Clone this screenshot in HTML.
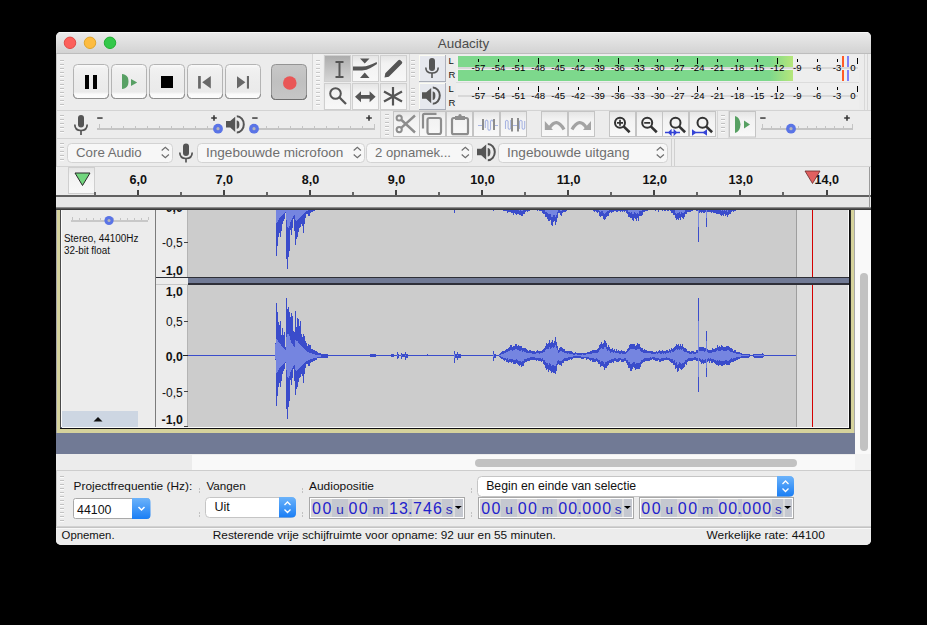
<!DOCTYPE html><html><head><meta charset="utf-8"><style>html,body{margin:0;padding:0;background:#000;width:927px;height:625px;overflow:hidden}svg{display:block}</style></head><body>
<svg width="927" height="625" viewBox="0 0 927 625" font-family="Liberation Sans" shape-rendering="crispEdges">
<defs>
<linearGradient id="gT" x1="0" y1="0" x2="0" y2="1"><stop offset="0" stop-color="#ebebeb"/><stop offset="1" stop-color="#d3d3d3"/></linearGradient>
<linearGradient id="gB" x1="0" y1="0" x2="0" y2="1"><stop offset="0" stop-color="#fbfbfb"/><stop offset="0.12" stop-color="#f1f1f1"/><stop offset="0.5" stop-color="#ececec"/><stop offset="0.8" stop-color="#eaeaea"/><stop offset="0.88" stop-color="#fafafa"/><stop offset="1" stop-color="#fcfcfc"/></linearGradient>
<linearGradient id="gR" x1="0" y1="0" x2="0" y2="1"><stop offset="0" stop-color="#c8c8c8"/><stop offset="0.5" stop-color="#c0c0c0"/><stop offset="1" stop-color="#c6c6c6"/></linearGradient>
<linearGradient id="gSel" x1="0" y1="0" x2="0" y2="1"><stop offset="0" stop-color="#acacac"/><stop offset="1" stop-color="#d6d6d6"/></linearGradient>
<linearGradient id="gTool" x1="0" y1="0" x2="0" y2="1"><stop offset="0" stop-color="#e4e4e4"/><stop offset="0.3" stop-color="#f2f2f2"/><stop offset="1" stop-color="#f8f8f8"/></linearGradient>
<linearGradient id="gGreen" x1="0" y1="0" x2="1" y2="0"><stop offset="0" stop-color="#7dd88c"/><stop offset="0.93" stop-color="#7dd88c"/><stop offset="1" stop-color="#b6e67a"/></linearGradient>
<linearGradient id="gBlue" x1="0" y1="0" x2="0" y2="1"><stop offset="0" stop-color="#6cb3fa"/><stop offset="1" stop-color="#1a7ef5"/></linearGradient>
<clipPath id="win"><rect x="56" y="32" width="815" height="513" rx="5"/></clipPath>
</defs>
<g clip-path="url(#win)">
<rect x="56" y="32" width="815" height="513" fill="#ececec"/>
<rect x="56" y="32" width="815" height="21" fill="url(#gT)"/>
<rect x="56" y="32" width="815" height="1" fill="#f6f6f6"/>
<rect x="56" y="53" width="815" height="1" fill="#bdbdbd"/>
<g shape-rendering="auto">
<circle cx="70" cy="42.8" r="5.75" fill="#fc605b" stroke="#e0443e" stroke-width="0.9"/>
<circle cx="90" cy="42.8" r="5.75" fill="#fdbc40" stroke="#dea123" stroke-width="0.9"/>
<circle cx="110" cy="42.8" r="5.75" fill="#34c84a" stroke="#1aab29" stroke-width="0.9"/>
<text x="463.5" y="48" font-size="13" fill="#4c4c4c" text-anchor="middle" textLength="51.5" lengthAdjust="spacingAndGlyphs">Audacity</text>
</g>
<rect x="56" y="110" width="815" height="1" fill="#d3d3d3"/>
<rect x="56" y="138" width="815" height="1" fill="#d3d3d3"/>
<rect x="56" y="166" width="815" height="1" fill="#d3d3d3"/>
<rect x="56" y="54" width="1" height="491" fill="#c9c9c9"/>
<rect x="60" y="60" width="4" height="1" fill="#c2c2c2"/>
<rect x="60" y="61" width="4" height="1" fill="#fbfbfb"/>
<rect x="60" y="64" width="4" height="1" fill="#c2c2c2"/>
<rect x="60" y="65" width="4" height="1" fill="#fbfbfb"/>
<rect x="60" y="68" width="4" height="1" fill="#c2c2c2"/>
<rect x="60" y="69" width="4" height="1" fill="#fbfbfb"/>
<rect x="60" y="72" width="4" height="1" fill="#c2c2c2"/>
<rect x="60" y="73" width="4" height="1" fill="#fbfbfb"/>
<rect x="60" y="76" width="4" height="1" fill="#c2c2c2"/>
<rect x="60" y="77" width="4" height="1" fill="#fbfbfb"/>
<rect x="60" y="80" width="4" height="1" fill="#c2c2c2"/>
<rect x="60" y="81" width="4" height="1" fill="#fbfbfb"/>
<rect x="60" y="84" width="4" height="1" fill="#c2c2c2"/>
<rect x="60" y="85" width="4" height="1" fill="#fbfbfb"/>
<rect x="60" y="88" width="4" height="1" fill="#c2c2c2"/>
<rect x="60" y="89" width="4" height="1" fill="#fbfbfb"/>
<rect x="60" y="92" width="4" height="1" fill="#c2c2c2"/>
<rect x="60" y="93" width="4" height="1" fill="#fbfbfb"/>
<rect x="60" y="96" width="4" height="1" fill="#c2c2c2"/>
<rect x="60" y="97" width="4" height="1" fill="#fbfbfb"/>
<rect x="60" y="100" width="4" height="1" fill="#c2c2c2"/>
<rect x="60" y="101" width="4" height="1" fill="#fbfbfb"/>
<rect x="60" y="104" width="4" height="1" fill="#c2c2c2"/>
<rect x="60" y="105" width="4" height="1" fill="#fbfbfb"/>
<g shape-rendering="auto">
<rect x="73.5" y="64.5" width="35" height="34" rx="4" fill="url(#gB)" stroke="#b4b4b4"/>
<path d="M73.5 94 q0 4.5 4 4.5 h27 q4 0 4 -4.5" stroke="#8e8e8e" fill="none"/>
<rect x="111.5" y="64.5" width="35" height="34" rx="4" fill="url(#gB)" stroke="#b4b4b4"/>
<path d="M111.5 94 q0 4.5 4 4.5 h27 q4 0 4 -4.5" stroke="#8e8e8e" fill="none"/>
<rect x="149.5" y="64.5" width="35" height="34" rx="4" fill="url(#gB)" stroke="#b4b4b4"/>
<path d="M149.5 94 q0 4.5 4 4.5 h27 q4 0 4 -4.5" stroke="#8e8e8e" fill="none"/>
<rect x="187.5" y="64.5" width="35" height="34" rx="4" fill="url(#gB)" stroke="#b4b4b4"/>
<path d="M187.5 94 q0 4.5 4 4.5 h27 q4 0 4 -4.5" stroke="#8e8e8e" fill="none"/>
<rect x="225.5" y="64.5" width="35" height="34" rx="4" fill="url(#gB)" stroke="#b4b4b4"/>
<path d="M225.5 94 q0 4.5 4 4.5 h27 q4 0 4 -4.5" stroke="#8e8e8e" fill="none"/>
<rect x="271.5" y="64.5" width="35" height="35" rx="4" fill="url(#gR)" stroke="#949494"/>
<path d="M271.5 95 q0 4.5 4 4.5 h27 q4 0 4 -4.5" stroke="#6e6e6e" fill="none"/>
<rect x="85" y="75" width="4" height="14" fill="#000"/>
<rect x="93" y="75" width="4" height="14" fill="#000"/>
<path d="M122 74 C126.5 74.5 128.5 77 128.5 81.5 C128.5 86 126.5 88.5 122 89 Z" fill="#58a064"/>
<path d="M131 79 L137.2 82.5 L131 86 Z" fill="#58a064"/>
<rect x="161" y="76" width="12" height="12" fill="#000"/>
<rect x="198.1" y="76" width="2.7" height="12.6" fill="#686868"/><path d="M210.8 76 L202.2 82.3 L210.8 88.6 Z" fill="#686868"/>
<path d="M237 76.2 L245.4 82.3 L237 88.4 Z" fill="#686868"/><rect x="246.9" y="76" width="2.1" height="12.6" fill="#686868"/>
<circle cx="289.8" cy="83" r="6.8" fill="#e95757"/>
</g>
<rect x="312" y="54" width="1" height="56" fill="#d6d6d6"/>
<rect x="313" y="54" width="10" height="56" fill="#f0f0f0"/>
<rect x="316" y="60" width="4" height="1" fill="#c8c8c8"/>
<rect x="316" y="61" width="4" height="1" fill="#fbfbfb"/>
<rect x="316" y="64" width="4" height="1" fill="#c8c8c8"/>
<rect x="316" y="65" width="4" height="1" fill="#fbfbfb"/>
<rect x="316" y="68" width="4" height="1" fill="#c8c8c8"/>
<rect x="316" y="69" width="4" height="1" fill="#fbfbfb"/>
<rect x="316" y="72" width="4" height="1" fill="#c8c8c8"/>
<rect x="316" y="73" width="4" height="1" fill="#fbfbfb"/>
<rect x="316" y="76" width="4" height="1" fill="#c8c8c8"/>
<rect x="316" y="77" width="4" height="1" fill="#fbfbfb"/>
<rect x="316" y="80" width="4" height="1" fill="#c8c8c8"/>
<rect x="316" y="81" width="4" height="1" fill="#fbfbfb"/>
<rect x="316" y="84" width="4" height="1" fill="#c8c8c8"/>
<rect x="316" y="85" width="4" height="1" fill="#fbfbfb"/>
<rect x="316" y="88" width="4" height="1" fill="#c8c8c8"/>
<rect x="316" y="89" width="4" height="1" fill="#fbfbfb"/>
<rect x="316" y="92" width="4" height="1" fill="#c8c8c8"/>
<rect x="316" y="93" width="4" height="1" fill="#fbfbfb"/>
<rect x="316" y="96" width="4" height="1" fill="#c8c8c8"/>
<rect x="316" y="97" width="4" height="1" fill="#fbfbfb"/>
<rect x="316" y="100" width="4" height="1" fill="#c8c8c8"/>
<rect x="316" y="101" width="4" height="1" fill="#fbfbfb"/>
<rect x="316" y="104" width="4" height="1" fill="#c8c8c8"/>
<rect x="316" y="105" width="4" height="1" fill="#fbfbfb"/>
<g shape-rendering="auto">
<rect x="324.5" y="55.5" width="26" height="26" fill="url(#gSel)" stroke="#cfcfcf"/>
<rect x="352.5" y="55.5" width="26" height="26" fill="url(#gTool)" stroke="#cfcfcf"/>
<rect x="380.5" y="55.5" width="26" height="26" fill="url(#gTool)" stroke="#cfcfcf"/>
<rect x="324.5" y="83.5" width="26" height="26" fill="url(#gTool)" stroke="#cfcfcf"/>
<rect x="352.5" y="83.5" width="26" height="26" fill="url(#gTool)" stroke="#cfcfcf"/>
<rect x="380.5" y="83.5" width="26" height="26" fill="url(#gTool)" stroke="#cfcfcf"/>
<path d="M335.5 62h8M335.5 77h8M339.5 62v15" stroke="#555" stroke-width="2" fill="none"/>
<path d="M360 58.5h9.5l-4.75 5z M360 78h9.5l-4.75-5.5z" fill="#555"/>
<path d="M353 66.5 h9 q4 0 7 -1.2 q4 -1.2 7.7 -3.2 l0.3 2 q-3 2 -6.5 4 q-3.5 2.2 -8.5 2.4 h-9z" fill="#555"/>
<path d="M384.5 77.5 l0.8 -4.3 l13 -13 q1 -1 2.2 0 l1.3 1.3 q1 1 0 2.2 l-13 13 z" fill="#555"/>
<circle cx="335.5" cy="93.5" r="5.3" stroke="#555" stroke-width="2" fill="none"/><path d="M339.3 97.3 L346 104" stroke="#555" stroke-width="2.3"/>
<path d="M355 96.8 l6 -5.5 v3.6 h8.6 v-3.6 l6 5.5 l-6 5.5 v-3.6 h-8.6 v3.6 z" fill="#555"/>
<path d="M393 87v18.5 M384 91.5 l18 10 M402 91.5 l-18 10" stroke="#555" stroke-width="2.2"/>
</g>
<rect x="409" y="54" width="1" height="56" fill="#d6d6d6"/>
<rect x="411" y="60" width="4" height="1" fill="#c2c2c2"/>
<rect x="411" y="61" width="4" height="1" fill="#fbfbfb"/>
<rect x="411" y="64" width="4" height="1" fill="#c2c2c2"/>
<rect x="411" y="65" width="4" height="1" fill="#fbfbfb"/>
<rect x="411" y="68" width="4" height="1" fill="#c2c2c2"/>
<rect x="411" y="69" width="4" height="1" fill="#fbfbfb"/>
<rect x="411" y="72" width="4" height="1" fill="#c2c2c2"/>
<rect x="411" y="73" width="4" height="1" fill="#fbfbfb"/>
<rect x="411" y="76" width="4" height="1" fill="#c2c2c2"/>
<rect x="411" y="77" width="4" height="1" fill="#fbfbfb"/>
<rect x="411" y="88" width="4" height="1" fill="#c2c2c2"/>
<rect x="411" y="89" width="4" height="1" fill="#fbfbfb"/>
<rect x="411" y="92" width="4" height="1" fill="#c2c2c2"/>
<rect x="411" y="93" width="4" height="1" fill="#fbfbfb"/>
<rect x="411" y="96" width="4" height="1" fill="#c2c2c2"/>
<rect x="411" y="97" width="4" height="1" fill="#fbfbfb"/>
<rect x="411" y="100" width="4" height="1" fill="#c2c2c2"/>
<rect x="411" y="101" width="4" height="1" fill="#fbfbfb"/>
<rect x="411" y="104" width="4" height="1" fill="#c2c2c2"/>
<rect x="411" y="105" width="4" height="1" fill="#fbfbfb"/>
<g shape-rendering="auto">
</g>
<rect x="419" y="55" width="27" height="27" fill="#e6e8ee"/>
<rect x="419" y="55" width="27" height="1" fill="#fbfbf2"/>
<rect x="419" y="55" width="1" height="27" fill="#fbfbf2"/>
<rect x="445" y="55" width="1" height="27" fill="#aeb2bd"/>
<rect x="419" y="81" width="27" height="1" fill="#a9adb8"/>
<rect x="419" y="83" width="27" height="27" fill="#e6e8ee"/>
<rect x="419" y="83" width="27" height="1" fill="#fbfbf2"/>
<rect x="419" y="83" width="1" height="27" fill="#fbfbf2"/>
<rect x="445" y="83" width="1" height="27" fill="#aeb2bd"/>
<rect x="419" y="109" width="27" height="1" fill="#a9adb8"/>
<g shape-rendering="auto">
<rect x="429" y="58" width="6" height="13" rx="3" fill="#555"/><path d="M425.8 67.5 q0 5.5 6.2 5.5 q6.2 0 6.2 -5.5" stroke="#555" stroke-width="1.6" fill="none"/><path d="M432 73v5" stroke="#555" stroke-width="1.6"/>
<path d="M422 92.2 h4.2 l5 -4.3 v15.3 l-5 -4.4 h-4.2z" fill="#555"/><path d="M432.7 91.6 a2.7 4.2 0 0 1 0 8.4z" fill="#555"/><path d="M432.8 87.5 a7 8.1 0 0 1 0 16.2" stroke="#555" stroke-width="2" fill="none"/>
</g>
<text x="448.5" y="64" font-size="9.5" fill="#111" shape-rendering="auto">L</text>
<text x="448.5" y="78" font-size="9.5" fill="#111" shape-rendering="auto">R</text>
<text x="448.5" y="92" font-size="9.5" fill="#111" shape-rendering="auto">L</text>
<text x="448.5" y="106" font-size="9.5" fill="#111" shape-rendering="auto">R</text>
<rect x="456" y="55" width="403" height="27" fill="#eeeeee"/>
<rect x="456" y="83" width="403" height="26" fill="#eeeeee"/>
<rect x="456" y="82" width="403" height="1" fill="#dcdcdc"/>
<rect x="458" y="56" width="335" height="11" fill="url(#gGreen)"/>
<rect x="458" y="70" width="335" height="11" fill="url(#gGreen)"/>
<rect x="458" y="67" width="400" height="2" fill="#d8d8d8"/>
<rect x="458" y="95" width="400" height="2" fill="#d8d8d8"/>
<rect x="842" y="56" width="2" height="11" fill="#ff5a28"/>
<rect x="842" y="70" width="2" height="11" fill="#ff5a28"/>
<rect x="847" y="56" width="2" height="11" fill="#7f7ffa"/>
<rect x="847" y="70" width="2" height="11" fill="#7f7ffa"/>
<g shape-rendering="auto">
<rect x="478" y="59" width="1" height="3" fill="#000"/>
<text x="478.5" y="71.2" font-size="9.6" fill="#000" text-anchor="middle">-57</text>
<rect x="478" y="87" width="1" height="3" fill="#000"/>
<text x="478.5" y="99.2" font-size="9.6" fill="#000" text-anchor="middle">-57</text>
<rect x="498" y="59" width="1" height="3" fill="#000"/>
<text x="498.42" y="71.2" font-size="9.6" fill="#000" text-anchor="middle">-54</text>
<rect x="498" y="87" width="1" height="3" fill="#000"/>
<text x="498.42" y="99.2" font-size="9.6" fill="#000" text-anchor="middle">-54</text>
<rect x="518" y="59" width="1" height="3" fill="#000"/>
<text x="518.3399999999999" y="71.2" font-size="9.6" fill="#000" text-anchor="middle">-51</text>
<rect x="518" y="87" width="1" height="3" fill="#000"/>
<text x="518.3399999999999" y="99.2" font-size="9.6" fill="#000" text-anchor="middle">-51</text>
<rect x="538" y="58" width="1" height="6" fill="#000"/>
<text x="538.26" y="71.2" font-size="9.6" fill="#000" text-anchor="middle">-48</text>
<rect x="538" y="86" width="1" height="6" fill="#000"/>
<text x="538.26" y="99.2" font-size="9.6" fill="#000" text-anchor="middle">-48</text>
<rect x="558" y="59" width="1" height="3" fill="#000"/>
<text x="558.18" y="71.2" font-size="9.6" fill="#000" text-anchor="middle">-45</text>
<rect x="558" y="87" width="1" height="3" fill="#000"/>
<text x="558.18" y="99.2" font-size="9.6" fill="#000" text-anchor="middle">-45</text>
<rect x="578" y="59" width="1" height="3" fill="#000"/>
<text x="578.0999999999999" y="71.2" font-size="9.6" fill="#000" text-anchor="middle">-42</text>
<rect x="578" y="87" width="1" height="3" fill="#000"/>
<text x="578.0999999999999" y="99.2" font-size="9.6" fill="#000" text-anchor="middle">-42</text>
<rect x="598" y="59" width="1" height="3" fill="#000"/>
<text x="598.02" y="71.2" font-size="9.6" fill="#000" text-anchor="middle">-39</text>
<rect x="598" y="87" width="1" height="3" fill="#000"/>
<text x="598.02" y="99.2" font-size="9.6" fill="#000" text-anchor="middle">-39</text>
<rect x="618" y="58" width="1" height="6" fill="#000"/>
<text x="617.9399999999999" y="71.2" font-size="9.6" fill="#000" text-anchor="middle">-36</text>
<rect x="618" y="86" width="1" height="6" fill="#000"/>
<text x="617.9399999999999" y="99.2" font-size="9.6" fill="#000" text-anchor="middle">-36</text>
<rect x="638" y="59" width="1" height="3" fill="#000"/>
<text x="637.8599999999999" y="71.2" font-size="9.6" fill="#000" text-anchor="middle">-33</text>
<rect x="638" y="87" width="1" height="3" fill="#000"/>
<text x="637.8599999999999" y="99.2" font-size="9.6" fill="#000" text-anchor="middle">-33</text>
<rect x="657" y="59" width="1" height="3" fill="#000"/>
<text x="657.78" y="71.2" font-size="9.6" fill="#000" text-anchor="middle">-30</text>
<rect x="657" y="87" width="1" height="3" fill="#000"/>
<text x="657.78" y="99.2" font-size="9.6" fill="#000" text-anchor="middle">-30</text>
<rect x="677" y="59" width="1" height="3" fill="#000"/>
<text x="677.6999999999999" y="71.2" font-size="9.6" fill="#000" text-anchor="middle">-27</text>
<rect x="677" y="87" width="1" height="3" fill="#000"/>
<text x="677.6999999999999" y="99.2" font-size="9.6" fill="#000" text-anchor="middle">-27</text>
<rect x="697" y="58" width="1" height="6" fill="#000"/>
<text x="697.6199999999999" y="71.2" font-size="9.6" fill="#000" text-anchor="middle">-24</text>
<rect x="697" y="86" width="1" height="6" fill="#000"/>
<text x="697.6199999999999" y="99.2" font-size="9.6" fill="#000" text-anchor="middle">-24</text>
<rect x="717" y="59" width="1" height="3" fill="#000"/>
<text x="717.54" y="71.2" font-size="9.6" fill="#000" text-anchor="middle">-21</text>
<rect x="717" y="87" width="1" height="3" fill="#000"/>
<text x="717.54" y="99.2" font-size="9.6" fill="#000" text-anchor="middle">-21</text>
<rect x="737" y="59" width="1" height="3" fill="#000"/>
<text x="737.46" y="71.2" font-size="9.6" fill="#000" text-anchor="middle">-18</text>
<rect x="737" y="87" width="1" height="3" fill="#000"/>
<text x="737.46" y="99.2" font-size="9.6" fill="#000" text-anchor="middle">-18</text>
<rect x="757" y="59" width="1" height="3" fill="#000"/>
<text x="757.3799999999999" y="71.2" font-size="9.6" fill="#000" text-anchor="middle">-15</text>
<rect x="757" y="87" width="1" height="3" fill="#000"/>
<text x="757.3799999999999" y="99.2" font-size="9.6" fill="#000" text-anchor="middle">-15</text>
<rect x="777" y="58" width="1" height="6" fill="#000"/>
<text x="777.3" y="71.2" font-size="9.6" fill="#000" text-anchor="middle">-12</text>
<rect x="777" y="86" width="1" height="6" fill="#000"/>
<text x="777.3" y="99.2" font-size="9.6" fill="#000" text-anchor="middle">-12</text>
<rect x="797" y="59" width="1" height="3" fill="#000"/>
<text x="797.22" y="71.2" font-size="9.6" fill="#000" text-anchor="middle">-9</text>
<rect x="797" y="87" width="1" height="3" fill="#000"/>
<text x="797.22" y="99.2" font-size="9.6" fill="#000" text-anchor="middle">-9</text>
<rect x="817" y="59" width="1" height="3" fill="#000"/>
<text x="817.14" y="71.2" font-size="9.6" fill="#000" text-anchor="middle">-6</text>
<rect x="817" y="87" width="1" height="3" fill="#000"/>
<text x="817.14" y="99.2" font-size="9.6" fill="#000" text-anchor="middle">-6</text>
<rect x="837" y="59" width="1" height="3" fill="#000"/>
<text x="837.06" y="71.2" font-size="9.6" fill="#000" text-anchor="middle">-3</text>
<rect x="837" y="87" width="1" height="3" fill="#000"/>
<text x="837.06" y="99.2" font-size="9.6" fill="#000" text-anchor="middle">-3</text>
<rect x="857" y="58" width="1" height="6" fill="#000"/>
<text x="852.8" y="71.2" font-size="9.6" fill="#000" text-anchor="middle">0</text>
<rect x="857" y="86" width="1" height="6" fill="#000"/>
<text x="852.8" y="99.2" font-size="9.6" fill="#000" text-anchor="middle">0</text>
</g>
<rect x="864" y="54" width="1" height="56" fill="#d8d8d8"/>
<rect x="867" y="54" width="1" height="56" fill="#d8d8d8"/>
<rect x="60" y="115" width="4" height="1" fill="#c2c2c2"/>
<rect x="60" y="116" width="4" height="1" fill="#fbfbfb"/>
<rect x="60" y="119" width="4" height="1" fill="#c2c2c2"/>
<rect x="60" y="120" width="4" height="1" fill="#fbfbfb"/>
<rect x="60" y="123" width="4" height="1" fill="#c2c2c2"/>
<rect x="60" y="124" width="4" height="1" fill="#fbfbfb"/>
<rect x="60" y="127" width="4" height="1" fill="#c2c2c2"/>
<rect x="60" y="128" width="4" height="1" fill="#fbfbfb"/>
<rect x="60" y="131" width="4" height="1" fill="#c2c2c2"/>
<rect x="60" y="132" width="4" height="1" fill="#fbfbfb"/>
<g shape-rendering="auto">
<rect x="78" y="115" width="6" height="12.5" rx="3" fill="#555"/><path d="M74.8 124.5 q0 6 6.2 6 q6.2 0 6.2 -6" stroke="#555" stroke-width="1.7" fill="none"/><path d="M81 130.5v4.5" stroke="#555" stroke-width="1.7"/>
<path d="M226 121.0 h4.2 l5 -4.3 v15.3 l-5 -4.4 h-4.2z" fill="#555"/><path d="M236.7 120.39999999999999 a2.7 4.2 0 0 1 0 8.4z" fill="#555"/><path d="M236.8 116.3 a7 8.1 0 0 1 0 16.2" stroke="#555" stroke-width="2" fill="none"/>
</g>
<rect x="97" y="128" width="123" height="2" fill="#c4c4c4"/>
<rect x="99" y="124" width="1" height="4" fill="#c4c4c4"/>
<rect x="111" y="126" width="1" height="2" fill="#c4c4c4"/>
<rect x="123" y="126" width="1" height="2" fill="#c4c4c4"/>
<rect x="135" y="126" width="1" height="2" fill="#c4c4c4"/>
<rect x="147" y="126" width="1" height="2" fill="#c4c4c4"/>
<rect x="159" y="126" width="1" height="2" fill="#c4c4c4"/>
<rect x="171" y="126" width="1" height="2" fill="#c4c4c4"/>
<rect x="183" y="126" width="1" height="2" fill="#c4c4c4"/>
<rect x="195" y="126" width="1" height="2" fill="#c4c4c4"/>
<rect x="207" y="126" width="1" height="2" fill="#c4c4c4"/>
<rect x="219" y="124" width="1" height="4" fill="#c4c4c4"/>
<rect x="97.2" y="117.2" width="5.4" height="1.7" fill="#505050" shape-rendering="auto"/>
<path d="M211.2 118h5.6 M214 115.2v5.6" stroke="#383838" stroke-width="1.6" shape-rendering="auto"/>
<circle cx="218" cy="128.7" r="4.9" fill="#5a74e6" shape-rendering="auto"/><circle cx="218" cy="128.7" r="1.6" fill="#b4b4bc" shape-rendering="auto"/>
<rect x="254" y="128" width="121" height="2" fill="#c4c4c4"/>
<rect x="254" y="124" width="1" height="4" fill="#c4c4c4"/>
<rect x="266" y="126" width="1" height="2" fill="#c4c4c4"/>
<rect x="278" y="126" width="1" height="2" fill="#c4c4c4"/>
<rect x="290" y="126" width="1" height="2" fill="#c4c4c4"/>
<rect x="302" y="126" width="1" height="2" fill="#c4c4c4"/>
<rect x="314" y="126" width="1" height="2" fill="#c4c4c4"/>
<rect x="326" y="126" width="1" height="2" fill="#c4c4c4"/>
<rect x="338" y="126" width="1" height="2" fill="#c4c4c4"/>
<rect x="350" y="126" width="1" height="2" fill="#c4c4c4"/>
<rect x="362" y="126" width="1" height="2" fill="#c4c4c4"/>
<rect x="374" y="124" width="1" height="4" fill="#c4c4c4"/>
<rect x="252.2" y="117.2" width="5.4" height="1.7" fill="#505050" shape-rendering="auto"/>
<path d="M366.2 118h5.6 M369 115.2v5.6" stroke="#383838" stroke-width="1.6" shape-rendering="auto"/>
<circle cx="254" cy="128.7" r="4.9" fill="#5a74e6" shape-rendering="auto"/><circle cx="254" cy="128.7" r="1.6" fill="#b4b4bc" shape-rendering="auto"/>
<rect x="380" y="111" width="1" height="27" fill="#d6d6d6"/>
<rect x="385" y="114" width="4" height="1" fill="#c2c2c2"/>
<rect x="385" y="115" width="4" height="1" fill="#fbfbfb"/>
<rect x="385" y="118" width="4" height="1" fill="#c2c2c2"/>
<rect x="385" y="119" width="4" height="1" fill="#fbfbfb"/>
<rect x="385" y="122" width="4" height="1" fill="#c2c2c2"/>
<rect x="385" y="123" width="4" height="1" fill="#fbfbfb"/>
<rect x="385" y="126" width="4" height="1" fill="#c2c2c2"/>
<rect x="385" y="127" width="4" height="1" fill="#fbfbfb"/>
<rect x="385" y="130" width="4" height="1" fill="#c2c2c2"/>
<rect x="385" y="131" width="4" height="1" fill="#fbfbfb"/>
<rect x="385" y="134" width="4" height="1" fill="#c2c2c2"/>
<rect x="385" y="135" width="4" height="1" fill="#fbfbfb"/>
<g shape-rendering="auto">
<rect x="393.5" y="111.5" width="26" height="25" fill="url(#gTool)" stroke="#c4c4c4"/>
<rect x="419.5" y="111.5" width="26" height="25" fill="url(#gTool)" stroke="#c4c4c4"/>
<rect x="446.5" y="111.5" width="26" height="25" fill="url(#gTool)" stroke="#c4c4c4"/>
<rect x="473.5" y="111.5" width="26" height="25" fill="url(#gTool)" stroke="#c4c4c4"/>
<rect x="500.5" y="111.5" width="26" height="25" fill="url(#gTool)" stroke="#c4c4c4"/>
<rect x="541.5" y="111.5" width="26" height="25" fill="url(#gTool)" stroke="#c4c4c4"/>
<rect x="568.5" y="111.5" width="26" height="25" fill="url(#gTool)" stroke="#c4c4c4"/>
<rect x="609.5" y="111.5" width="26" height="25" fill="url(#gTool)" stroke="#c4c4c4"/>
<rect x="636.5" y="111.5" width="26" height="25" fill="url(#gTool)" stroke="#c4c4c4"/>
<rect x="662.5" y="111.5" width="26" height="25" fill="url(#gTool)" stroke="#c4c4c4"/>
<rect x="689.5" y="111.5" width="26" height="25" fill="url(#gTool)" stroke="#c4c4c4"/>
<circle cx="399.2" cy="118" r="2.6" stroke="#8d8d8d" stroke-width="2" fill="none"/><circle cx="399.2" cy="129.6" r="2.6" stroke="#8d8d8d" stroke-width="2" fill="none"/><path d="M401.5 120 L415 132.5 M401.5 127.6 L415 115.5" stroke="#8d8d8d" stroke-width="2.4"/>
<path d="M423 128.5 v-13.2 q0-1.5 1.5-1.5 h12" stroke="#8d8d8d" stroke-width="2.2" fill="none"/><rect x="427.5" y="118" width="13.5" height="16" rx="2" stroke="#8d8d8d" stroke-width="2.2" fill="none"/>
<rect x="452" y="118" width="16" height="16.2" rx="1.8" stroke="#8d8d8d" stroke-width="2.2" fill="none"/><path d="M455 116 h10 v4 h-10z" fill="#8d8d8d"/><circle cx="460" cy="115.5" r="1.6" fill="#8d8d8d"/>
<path d="M478 125.5 h4 M495 125.5 h3" stroke="#a9b5e2" stroke-width="1.2"/><path d="M485.3 128 V121.5 Q486.6 118.8 487.9 121.5 V129 Q489.2 131.6 490.5 129 V121.5 Q491.8 118.8 493 121.5" stroke="#a9b5e2" stroke-width="1.1" fill="none"/><path d="M483 119v11 M494 119v11" stroke="#8d8d8d" stroke-width="2"/>
<path d="M505.5 129 V121.5 Q506.8 119 508.1 121.5 V128 Q509.4 130.6 510.7 128 V120" stroke="#a9b5e2" stroke-width="1.1" fill="none"/><path d="M513 125.5h4" stroke="#a9b5e2" stroke-width="1.2"/><path d="M519.5 129 V121.5 Q520.8 119 522.1 121.5 V128 Q523.4 130.6 524.7 128 V121" stroke="#a9b5e2" stroke-width="1.1" fill="none"/><path d="M512 118v13.5 M518 118v13.5" stroke="#8d8d8d" stroke-width="2"/>
<path d="M549.5 128 Q556.5 116.5 564 129.5" stroke="#a3a3a3" stroke-width="3.3" fill="none"/><path d="M544.8 121 V130 H553z" fill="#a3a3a3"/>
<path d="M586.5 128 Q579.5 116.5 572 129.5" stroke="#a3a3a3" stroke-width="3.3" fill="none"/><path d="M591 121 V130 H583z" fill="#a3a3a3"/>
<circle cx="620" cy="122.8" r="5" stroke="#333" stroke-width="2" fill="none"/><path d="M623.6 126.39999999999999 l6 5.8" stroke="#333" stroke-width="2.6"/>
<path d="M617 122.8h6 M620 119.8v6" stroke="#333" stroke-width="1.7"/>
<circle cx="647.2" cy="122.8" r="5" stroke="#333" stroke-width="2" fill="none"/><path d="M650.8000000000001 126.39999999999999 l6 5.8" stroke="#333" stroke-width="2.6"/>
<path d="M644.2 122.8h6" stroke="#333" stroke-width="1.7"/>
<circle cx="675.5" cy="122.8" r="5" stroke="#333" stroke-width="2" fill="none"/><path d="M679.1 126.39999999999999 l6 5.8" stroke="#333" stroke-width="2.6"/>
<path d="M665 132.5 H680" stroke="#3443d6" stroke-width="1.4"/><path d="M668 132.5 L671.6 128.8 V136.2z M677.2 132.5 L673.6 128.8 V136.2z" fill="#3443d6"/>
<circle cx="702.5" cy="122.8" r="5" stroke="#333" stroke-width="2" fill="none"/><path d="M706.1 126.39999999999999 l6 5.8" stroke="#333" stroke-width="2.6"/>
<path d="M692.5 132.5 H706.5" stroke="#3443d6" stroke-width="1.4"/><path d="M692 129.2 V135.8 L696.5 132.5z M707 129.2 V135.8 L702.5 132.5z" fill="#3443d6"/>
</g>
<rect x="717" y="111" width="1" height="27" fill="#d6d6d6"/>
<rect x="721" y="115" width="4" height="1" fill="#c2c2c2"/>
<rect x="721" y="116" width="4" height="1" fill="#fbfbfb"/>
<rect x="721" y="119" width="4" height="1" fill="#c2c2c2"/>
<rect x="721" y="120" width="4" height="1" fill="#fbfbfb"/>
<rect x="721" y="123" width="4" height="1" fill="#c2c2c2"/>
<rect x="721" y="124" width="4" height="1" fill="#fbfbfb"/>
<rect x="721" y="127" width="4" height="1" fill="#c2c2c2"/>
<rect x="721" y="128" width="4" height="1" fill="#fbfbfb"/>
<rect x="721" y="131" width="4" height="1" fill="#c2c2c2"/>
<rect x="721" y="132" width="4" height="1" fill="#fbfbfb"/>
<rect x="728" y="111" width="1" height="27" fill="#dcdcdc"/>
<rect x="729.5" y="111.5" width="26" height="25.5" fill="url(#gTool)" stroke="#c4c4c4" shape-rendering="auto"/>
<path d="M735 116 q5 1 5.5 8.5 q-0.5 7.5 -5.5 8.5z" fill="#56a062" shape-rendering="auto"/><path d="M744 120.5l6 4l-6 4z" fill="#56a062" shape-rendering="auto"/>
<rect x="761" y="128" width="92" height="2" fill="#c4c4c4"/>
<rect x="762" y="124" width="1" height="4" fill="#c4c4c4"/>
<rect x="771" y="126" width="1" height="2" fill="#c4c4c4"/>
<rect x="780" y="126" width="1" height="2" fill="#c4c4c4"/>
<rect x="789" y="126" width="1" height="2" fill="#c4c4c4"/>
<rect x="798" y="126" width="1" height="2" fill="#c4c4c4"/>
<rect x="807" y="126" width="1" height="2" fill="#c4c4c4"/>
<rect x="816" y="126" width="1" height="2" fill="#c4c4c4"/>
<rect x="825" y="126" width="1" height="2" fill="#c4c4c4"/>
<rect x="834" y="126" width="1" height="2" fill="#c4c4c4"/>
<rect x="843" y="126" width="1" height="2" fill="#c4c4c4"/>
<rect x="852" y="124" width="1" height="4" fill="#c4c4c4"/>
<rect x="760.2" y="117.2" width="5.4" height="1.7" fill="#505050" shape-rendering="auto"/>
<path d="M844.2 118h5.6 M847 115.2v5.6" stroke="#383838" stroke-width="1.6" shape-rendering="auto"/>
<circle cx="791" cy="128.7" r="4.9" fill="#5a74e6" shape-rendering="auto"/><circle cx="791" cy="128.7" r="1.6" fill="#b4b4bc" shape-rendering="auto"/>
<rect x="60" y="143" width="4" height="1" fill="#c2c2c2"/>
<rect x="60" y="144" width="4" height="1" fill="#fbfbfb"/>
<rect x="60" y="147" width="4" height="1" fill="#c2c2c2"/>
<rect x="60" y="148" width="4" height="1" fill="#fbfbfb"/>
<rect x="60" y="151" width="4" height="1" fill="#c2c2c2"/>
<rect x="60" y="152" width="4" height="1" fill="#fbfbfb"/>
<rect x="60" y="155" width="4" height="1" fill="#c2c2c2"/>
<rect x="60" y="156" width="4" height="1" fill="#fbfbfb"/>
<rect x="60" y="159" width="4" height="1" fill="#c2c2c2"/>
<rect x="60" y="160" width="4" height="1" fill="#fbfbfb"/>
<rect x="67.5" y="143.5" width="105" height="19" rx="4" fill="#f7f7f7" stroke="#d3d3d3" shape-rendering="auto"/>
<text x="76" y="157" font-size="13" fill="#6f6f6f" textLength="65.7" lengthAdjust="spacingAndGlyphs" shape-rendering="auto">Core Audio</text>
<path d="M161.70000000000002 150.5 l3.6 -3.3 l3.6 3.3 M161.70000000000002 154.5 l3.6 3.3 l3.6 -3.3" stroke="#6f6f6f" stroke-width="1.2" fill="none" shape-rendering="auto"/>
<rect x="197.5" y="143.5" width="167" height="19" rx="4" fill="#f7f7f7" stroke="#d3d3d3" shape-rendering="auto"/>
<text x="206" y="157" font-size="13" fill="#6f6f6f" textLength="137.3" lengthAdjust="spacingAndGlyphs" shape-rendering="auto">Ingebouwde microfoon</text>
<path d="M353.7 150.5 l3.6 -3.3 l3.6 3.3 M353.7 154.5 l3.6 3.3 l3.6 -3.3" stroke="#6f6f6f" stroke-width="1.2" fill="none" shape-rendering="auto"/>
<rect x="366.5" y="143.5" width="106" height="19" rx="4" fill="#f7f7f7" stroke="#d3d3d3" shape-rendering="auto"/>
<text x="375" y="157" font-size="13" fill="#6f6f6f" textLength="76" lengthAdjust="spacingAndGlyphs" shape-rendering="auto">2 opnamek...</text>
<path d="M461.7 150.5 l3.6 -3.3 l3.6 3.3 M461.7 154.5 l3.6 3.3 l3.6 -3.3" stroke="#6f6f6f" stroke-width="1.2" fill="none" shape-rendering="auto"/>
<rect x="498.5" y="143.5" width="169" height="19" rx="4" fill="#f7f7f7" stroke="#d3d3d3" shape-rendering="auto"/>
<text x="507" y="157" font-size="13" fill="#6f6f6f" textLength="122.5" lengthAdjust="spacingAndGlyphs" shape-rendering="auto">Ingebouwde uitgang</text>
<path d="M656.6999999999999 150.5 l3.6 -3.3 l3.6 3.3 M656.6999999999999 154.5 l3.6 3.3 l3.6 -3.3" stroke="#6f6f6f" stroke-width="1.2" fill="none" shape-rendering="auto"/>
<g shape-rendering="auto">
<rect x="183" y="143.5" width="6" height="12.5" rx="3" fill="#555"/><path d="M179.8 152.5 q0 6 6.2 6 q6.2 0 6.2 -6" stroke="#555" stroke-width="1.7" fill="none"/><path d="M186 158.5v4" stroke="#555" stroke-width="1.7"/>
<path d="M477 148.7 h4.2 l5 -4.3 v15.3 l-5 -4.4 h-4.2z" fill="#555"/><path d="M487.7 148.1 a2.7 4.2 0 0 1 0 8.4z" fill="#555"/><path d="M487.8 144.0 a7 8.1 0 0 1 0 16.2" stroke="#555" stroke-width="2" fill="none"/>
</g>
<rect x="671" y="139" width="1" height="27" fill="#d0d0d0"/>
<rect x="674" y="139" width="1" height="27" fill="#d0d0d0"/>
<rect x="56" y="167" width="815" height="28" fill="#ebebeb"/>
<rect x="68.5" y="167.5" width="26" height="26" fill="url(#gTool)" stroke="#cfcfcf" shape-rendering="auto"/>
<path d="M75 173 h15 l-7.5 12.5z" fill="#72d67e" stroke="#2a2a2a" stroke-width="1" shape-rendering="auto"/>
<rect x="94" y="192" width="2" height="3" fill="#666"/>
<rect x="137" y="190" width="2" height="5" fill="#444"/>
<rect x="180" y="192" width="2" height="3" fill="#666"/>
<rect x="223" y="190" width="2" height="5" fill="#444"/>
<rect x="266" y="192" width="2" height="3" fill="#666"/>
<rect x="309" y="190" width="2" height="5" fill="#444"/>
<rect x="352" y="192" width="2" height="3" fill="#666"/>
<rect x="395" y="190" width="2" height="5" fill="#444"/>
<rect x="438" y="192" width="2" height="3" fill="#666"/>
<rect x="481" y="190" width="2" height="5" fill="#444"/>
<rect x="524" y="192" width="2" height="3" fill="#666"/>
<rect x="567" y="190" width="2" height="5" fill="#444"/>
<rect x="610" y="192" width="2" height="3" fill="#666"/>
<rect x="653" y="190" width="2" height="5" fill="#444"/>
<rect x="696" y="192" width="2" height="3" fill="#666"/>
<rect x="739" y="190" width="2" height="5" fill="#444"/>
<rect x="782" y="192" width="2" height="3" fill="#666"/>
<rect x="826" y="190" width="2" height="5" fill="#444"/>
<text x="138.3" y="183.9" font-size="12.6" fill="#111" text-anchor="middle" font-weight="bold" shape-rendering="auto">6,0</text>
<text x="224.37" y="183.9" font-size="12.6" fill="#111" text-anchor="middle" font-weight="bold" shape-rendering="auto">7,0</text>
<text x="310.44" y="183.9" font-size="12.6" fill="#111" text-anchor="middle" font-weight="bold" shape-rendering="auto">8,0</text>
<text x="396.51" y="183.9" font-size="12.6" fill="#111" text-anchor="middle" font-weight="bold" shape-rendering="auto">9,0</text>
<text x="482.58" y="183.9" font-size="12.6" fill="#111" text-anchor="middle" font-weight="bold" shape-rendering="auto">10,0</text>
<text x="568.6499999999999" y="183.9" font-size="12.6" fill="#111" text-anchor="middle" font-weight="bold" shape-rendering="auto">11,0</text>
<text x="654.7199999999999" y="183.9" font-size="12.6" fill="#111" text-anchor="middle" font-weight="bold" shape-rendering="auto">12,0</text>
<text x="740.79" y="183.9" font-size="12.6" fill="#111" text-anchor="middle" font-weight="bold" shape-rendering="auto">13,0</text>
<text x="826.8599999999999" y="183.9" font-size="12.6" fill="#111" text-anchor="middle" font-weight="bold" shape-rendering="auto">14,0</text>
<rect x="56" y="195" width="815" height="2" fill="#606060"/>
<rect x="56" y="197" width="815" height="10" fill="#e6e6e6"/>
<rect x="869" y="167" width="1" height="42" fill="#9a9a9a"/>
<path d="M805 171h15l-7.5 12.5z" fill="#e06060" stroke="#6a2a2a" stroke-width="0.8" shape-rendering="auto"/>
<rect x="56" y="209" width="799" height="245" fill="#717a95"/>
<rect x="855" y="209" width="16" height="261" fill="#f9f9f9"/>
<rect x="57" y="209" width="3" height="224" fill="#d5d29c"/>
<rect x="56" y="209" width="1" height="224" fill="#a6a6a6"/>
<rect x="57" y="429" width="797" height="4" fill="#d5d29c"/>
<rect x="851" y="209" width="3" height="224" fill="#d5d29c"/>
<rect x="60" y="209" width="789" height="218" fill="#ececec"/>
<rect x="60" y="209" width="1" height="219" fill="#4a4a4a"/>
<rect x="61" y="209" width="1" height="218" fill="#fafafa"/>
<rect x="62" y="427" width="787" height="1" fill="#fafafa"/>
<rect x="60" y="428" width="791" height="1" fill="#111"/>
<rect x="848" y="209" width="1" height="219" fill="#fafafa"/>
<rect x="849" y="209" width="1" height="220" fill="#111"/>
<rect x="850" y="209" width="1" height="220" fill="#2a2a2a"/>
<rect x="854" y="209" width="1" height="224" fill="#a8a8a8"/>
<rect x="155" y="209" width="1" height="218" fill="#7b7b7b"/>
<rect x="187" y="209" width="1" height="218" fill="#b4b4b4"/>
<rect x="71" y="220" width="77" height="2" fill="#c8c8c8"/>
<rect x="72" y="217" width="1" height="3" fill="#c4c4c4"/>
<rect x="79" y="218" width="1" height="2" fill="#c4c4c4"/>
<rect x="86" y="218" width="1" height="2" fill="#c4c4c4"/>
<rect x="93" y="218" width="1" height="2" fill="#c4c4c4"/>
<rect x="100" y="218" width="1" height="2" fill="#c4c4c4"/>
<rect x="106" y="218" width="1" height="2" fill="#c4c4c4"/>
<rect x="113" y="218" width="1" height="2" fill="#c4c4c4"/>
<rect x="120" y="218" width="1" height="2" fill="#c4c4c4"/>
<rect x="127" y="218" width="1" height="2" fill="#c4c4c4"/>
<rect x="134" y="218" width="1" height="2" fill="#c4c4c4"/>
<rect x="141" y="218" width="1" height="2" fill="#c4c4c4"/>
<rect x="148" y="217" width="1" height="3" fill="#c4c4c4"/>
<circle cx="109" cy="220.5" r="4.6" fill="#5a74e6" shape-rendering="auto"/><circle cx="109" cy="220.5" r="1.5" fill="#b4b4bc" shape-rendering="auto"/>
<text x="64" y="241.8" font-size="10" fill="#111" textLength="74.4" lengthAdjust="spacingAndGlyphs" shape-rendering="auto">Stereo, 44100Hz</text>
<text x="64" y="253.6" font-size="10" fill="#111" textLength="46" lengthAdjust="spacingAndGlyphs" shape-rendering="auto">32-bit float</text>
<rect x="62" y="411" width="76" height="16" fill="#cdd6e2"/>
<path d="M93.5 421.5h9l-4.5-4.5z" fill="#111" shape-rendering="auto"/>
<rect x="188" y="209" width="608" height="68" fill="#cccccc"/>
<rect x="796" y="209" width="52" height="68" fill="#dedede"/>
<rect x="188" y="285" width="608" height="142" fill="#cccccc"/>
<rect x="796" y="285" width="52" height="142" fill="#dedede"/>
<rect x="796" y="209" width="1" height="68" fill="#9e9e9e"/>
<rect x="796" y="285" width="1" height="142" fill="#9e9e9e"/>
<rect x="156" y="277" width="693" height="1" fill="#2e2f36"/>
<rect x="188" y="278" width="661" height="5" fill="#717a95"/>
<rect x="188" y="283" width="661" height="2" fill="#2e2f38"/>
<rect x="156" y="278" width="32" height="7" fill="#ececec"/>
<rect x="156" y="284" width="32" height="1" fill="#c8c8c8"/>
<clipPath id="vrc"><rect x="156" y="210" width="32" height="67"/></clipPath><g clip-path="url(#vrc)">
<text x="182.8" y="212" font-size="12.3" fill="#111" text-anchor="end" font-weight="bold" shape-rendering="auto">0,0</text>
<text x="182.8" y="247.3" font-size="12" fill="#111" text-anchor="end" shape-rendering="auto">-0,5</text>
<text x="182.8" y="275.2" font-size="12.3" fill="#111" text-anchor="end" font-weight="bold" shape-rendering="auto">-1,0</text>
</g>
<text x="182.8" y="296" font-size="12.3" fill="#111" text-anchor="end" font-weight="bold" shape-rendering="auto">1,0</text>
<text x="182.8" y="325.5" font-size="12" fill="#111" text-anchor="end" shape-rendering="auto">0,5</text>
<text x="182.8" y="361" font-size="12.3" fill="#111" text-anchor="end" font-weight="bold" shape-rendering="auto">0,0</text>
<text x="182.8" y="397" font-size="12" fill="#111" text-anchor="end" shape-rendering="auto">-0,5</text>
<text x="182.8" y="424.3" font-size="12.3" fill="#111" text-anchor="end" font-weight="bold" shape-rendering="auto">-1,0</text>
<rect x="184" y="242" width="4" height="1" fill="#444"/>
<rect x="184" y="321" width="4" height="1" fill="#444"/>
<rect x="184" y="391" width="4" height="1" fill="#444"/>
<rect x="184" y="426" width="4" height="1" fill="#444"/>
<rect x="183" y="355" width="5" height="1" fill="#222"/>
<path d="M188 355H275V356H188zM275 343H276V360H275zM276 303H277V406H276zM277 312H278V396H277zM278 322H279V387H278zM279 325H280V383H279zM280 321H281V387H280zM281 335H282V381H281zM282 328H283V374H282zM283 335H284V371H283zM284 332H285V369H284zM285 347H286V363H285zM286 298H287V409H286zM287 309H288V419H287zM288 307H289V407H288zM289 312H290V401H289zM290 317H291V380H290zM291 313H292V385H291zM292 316H293V378H292zM293 331H294V369H293zM294 332H295V381H294zM295 311H296V395H295zM296 327H297V389H296zM297 318H298V387H297zM298 319H299V382H298zM299 326H300V378H299zM300 321H301V377H300zM301 334H302V374H301zM302 337H303V376H302zM303 334H304V383H303zM304 336H305V374H304zM305 341H306V368H305zM306 343H307V364H306zM307 346H308V364H307zM308 344H309V366H308zM309 345H310V366H309zM310 345H311V363H310zM311 349H313V362H311zM313 350H315V361H313zM315 351H317V360H315zM317 352H318V358H317zM318 353H321V358H318zM321 354H328V358H321zM328 355H370V356H328zM370 354H376V357H370zM376 355H391V356H376zM391 354H394V357H391zM394 355H397V356H394zM397 352H398V359H397zM398 354H399V358H398zM399 355H401V356H399zM401 353H402V359H401zM402 354H405V357H402zM405 352H406V360H405zM406 354H408V358H406zM408 355H427V356H408zM427 354H428V356H427zM428 355H454V356H428zM454 351H455V363H454zM455 354H457V358H455zM457 352H458V360H457zM458 354H461V358H458zM461 355H493V356H461zM493 351H494V361H493zM494 354H496V358H494zM496 355H499V356H496zM499 354H500V357H499zM500 353H501V358H500zM501 352H502V359H501zM502 351H503V359H502zM503 351H504V360H503zM504 351H505V361H504zM505 350H506V360H505zM506 349H508V362H506zM508 348H509V363H508zM509 347H510V362H509zM510 345H511V362H510zM511 345H512V363H511zM512 347H513V362H512zM513 346H515V364H513zM515 344H516V364H515zM516 344H517V363H516zM517 346H518V364H517zM518 345H519V365H518zM519 346H520V366H519zM520 346H521V365H520zM521 346H522V367H521zM522 348H524V366H522zM524 348H525V363H524zM525 348H526V362H525zM526 349H527V362H526zM527 350H528V361H527zM528 351H529V361H528zM529 350H530V361H529zM530 350H531V360H530zM531 351H535V360H531zM535 352H536V360H535zM536 351H537V361H536zM537 350H538V360H537zM538 351H541V361H538zM541 351H542V362H541zM542 350H543V361H542zM543 349H544V364H543zM544 348H545V365H544zM545 346H546V368H545zM546 343H547V370H546zM547 344H548V369H547zM548 343H549V372H548zM549 340H550V370H549zM550 343H551V371H550zM551 342H552V373H551zM552 340H553V372H552zM553 343H554V373H553zM554 341H555V373H554zM555 337H556V374H555zM556 342H557V371H556zM557 346H558V365H557zM558 350H559V364H558zM559 348H560V365H559zM560 347H561V365H560zM561 347H562V366H561zM562 348H563V363H562zM563 349H564V363H563zM564 349H565V361H564zM565 351H568V361H565zM568 351H570V360H568zM570 351H571V359H570zM571 351H572V360H571zM572 352H573V359H572zM573 353H575V358H573zM575 352H576V358H575zM576 353H581V358H576zM581 353H584V359H581zM584 353H586V358H584zM586 353H587V360H586zM587 352H589V359H587zM589 352H590V360H589zM590 351H591V361H590zM591 351H592V360H591zM592 350H596V362H592zM596 350H597V361H596zM597 349H598V362H597zM598 348H599V364H598zM599 345H600V364H599zM600 344H601V367H600zM601 342H602V366H601zM602 344H603V366H602zM603 343H604V367H603zM604 340H605V370H604zM605 341H606V368H605zM606 343H607V368H606zM607 347H608V366H607zM608 345H609V365H608zM609 347H610V363H609zM610 349H612V363H610zM612 348H613V362H612zM613 350H614V363H613zM614 349H615V361H614zM615 351H616V361H615zM616 349H617V362H616zM617 351H618V362H617zM618 350H619V362H618zM619 351H620V361H619zM620 351H621V360H620zM621 350H622V362H621zM622 351H624V362H622zM624 351H625V361H624zM625 352H626V361H625zM626 351H627V363H626zM627 349H628V365H627zM628 348H629V368H628zM629 345H630V368H629zM630 344H632V371H630zM632 344H633V369H632zM633 344H634V367H633zM634 344H635V368H634zM635 346H636V370H635zM636 345H637V369H636zM637 343H638V369H637zM638 344H640V369H638zM640 347H641V367H640zM641 348H642V364H641zM642 348H643V363H642zM643 350H644V362H643zM644 349H645V362H644zM645 350H647V361H645zM647 351H650V361H647zM650 351H652V360H650zM652 351H653V359H652zM653 352H655V360H653zM655 352H656V361H655zM656 351H657V361H656zM657 352H658V361H657zM658 351H659V360H658zM659 350H660V362H659zM660 351H661V362H660zM661 351H662V361H661zM662 350H663V361H662zM663 351H664V361H663zM664 351H666V360H664zM666 350H668V360H666zM668 351H669V360H668zM669 349H670V361H669zM670 350H671V362H670zM671 348H672V363H671zM672 349H673V363H672zM673 348H674V365H673zM674 347H675V365H674zM675 346H676V369H675zM676 344H677V368H676zM677 345H678V372H677zM678 344H679V371H678zM679 346H680V368H679zM680 344H681V369H680zM681 346H682V370H681zM682 344H683V369H682zM683 347H684V368H683zM684 348H685V367H684zM685 348H686V364H685zM686 349H687V365H686zM687 351H688V362H687zM688 351H690V361H688zM690 352H691V361H690zM691 351H693V361H691zM693 351H694V360H693zM694 352H696V360H694zM696 350H698V361H696zM698 298H699V392H698zM699 347H700V361H699zM700 347H701V362H700zM701 347H702V364H701zM702 347H703V363H702zM703 347H704V364H703zM704 348H706V363H704zM706 331H707V377H706zM707 349H708V362H707zM708 350H709V361H708zM709 350H710V363H709zM710 350H711V361H710zM711 350H712V363H711zM712 348H713V363H712zM713 349H714V362H713zM714 349H715V363H714zM715 348H716V364H715zM716 348H717V365H716zM717 345H718V365H717zM718 347H719V366H718zM719 346H720V365H719zM720 347H721V365H720zM721 345H722V366H721zM722 346H723V366H722zM723 347H725V365H723zM725 347H726V364H725zM726 346H729V365H726zM729 347H730V365H729zM730 348H731V363H730zM731 348H732V362H731zM732 349H733V362H732zM733 351H734V362H733zM734 350H736V361H734zM736 352H738V360H736zM738 352H740V359H738zM740 353H742V358H740zM742 354H749V358H742zM749 354H750V357H749zM750 355H753V356H750zM753 354H754V357H753zM754 354H762V358H754zM762 353H763V358H762zM763 354H764V357H763zM764 355H796V356H764z" fill="#3a4ccb"/><path d="M275 344H276V359H275zM276 339H277V373H276zM277 340H278V372H277zM278 342H279V370H278zM279 343H280V368H279zM280 344H281V367H280zM281 346H282V366H281zM282 347H283V365H282zM283 348H284V364H283zM284 349H285V363H284zM285 350H286V362H285zM286 337H287V370H286zM287 334H288V377H287zM288 334H289V378H288zM289 336H290V376H289zM290 340H291V372H290zM291 343H292V370H291zM292 344H293V368H292zM293 346H294V366H293zM294 347H295V365H294zM295 340H296V370H295zM296 341H297V371H296zM297 341H298V370H297zM298 343H299V369H298zM299 344H300V368H299zM300 345H301V367H300zM301 346H302V366H301zM302 347H303V365H302zM303 348H304V364H303zM304 349H305V363H304zM305 350H306V362H305zM306 351H307V361H306zM307 352H308V361H307zM308 352H309V360H308zM309 353H310V360H309zM310 353H312V359H310zM312 354H313V359H312zM313 354H315V358H313zM315 355H317V358H315zM317 355H321V357H317zM397 355H398V356H397zM401 355H402V356H401zM405 355H406V356H405zM454 354H455V358H454zM457 355H458V356H457zM493 354H494V357H493zM499 355H501V356H499zM501 354H503V357H501zM503 354H504V358H503zM504 353H506V358H504zM506 352H507V359H506zM507 352H508V358H507zM508 351H509V360H508zM509 351H510V359H509zM510 350H512V359H510zM512 351H513V359H512zM513 350H515V360H513zM515 349H516V360H515zM516 349H517V359H516zM517 350H518V360H517zM518 350H519V361H518zM519 351H521V361H519zM521 350H522V362H521zM522 352H523V361H522zM523 351H524V361H523zM524 352H526V359H524zM526 353H527V359H526zM527 353H530V358H527zM530 353H532V357H530zM532 354H535V357H532zM535 354H536V358H535zM536 353H539V358H536zM539 354H540V358H539zM540 353H541V358H540zM541 353H542V359H541zM542 353H543V358H542zM543 352H545V360H543zM545 350H546V362H545zM546 349H548V363H546zM548 349H549V365H548zM549 347H550V363H549zM550 349H551V364H550zM551 348H552V366H551zM552 347H553V365H552zM553 348H554V365H553zM554 347H555V366H554zM555 345H556V366H555zM556 348H557V364H556zM557 350H558V361H557zM558 353H559V360H558zM559 352H560V361H559zM560 351H562V361H560zM562 352H563V360H562zM563 352H564V359H563zM564 353H567V358H564zM567 354H568V358H567zM568 353H569V357H568zM569 354H573V357H569zM573 355H575V356H573zM575 354H577V356H575zM577 355H581V356H577zM581 355H582V357H581zM582 354H583V357H582zM583 355H586V357H583zM586 354H589V357H586zM589 354H592V358H589zM592 353H594V358H592zM594 353H596V359H594zM596 353H597V358H596zM597 353H598V359H597zM598 352H599V360H598zM599 350H600V360H599zM600 349H601V362H600zM601 348H602V361H601zM602 349H603V361H602zM603 349H604V362H603zM604 347H605V364H604zM605 347H606V362H605zM606 349H607V362H606zM607 351H608V361H607zM608 350H609V361H608zM609 351H610V360H609zM610 353H611V360H610zM611 352H613V359H611zM613 353H614V359H613zM614 352H615V358H614zM615 353H616V358H615zM616 353H618V359H616zM618 353H619V358H618zM619 354H621V358H619zM621 353H622V359H621zM622 354H624V359H622zM624 354H626V358H624zM626 353H627V360H626zM627 352H628V360H627zM628 351H629V362H628zM629 350H630V362H629zM630 349H632V364H630zM632 349H633V363H632zM633 349H635V362H633zM635 350H636V364H635zM636 350H637V363H636zM637 349H640V363H637zM640 351H641V362H640zM641 352H643V360H641zM643 353H644V359H643zM644 353H650V358H644zM650 353H651V357H650zM651 354H652V358H651zM652 354H655V357H652zM655 354H656V358H655zM656 353H657V358H656zM657 354H658V358H657zM658 353H659V358H658zM659 353H660V359H659zM660 354H661V359H660zM661 354H662V358H661zM662 353H663V358H662zM663 354H664V358H663zM664 353H665V358H664zM665 354H666V358H665zM666 353H667V357H666zM667 353H669V358H667zM669 352H670V358H669zM670 353H671V359H670zM671 351H672V359H671zM672 352H673V359H672zM673 352H674V361H673zM674 351H675V360H674zM675 350H676V363H675zM676 349H677V362H676zM677 350H678V365H677zM678 349H679V364H678zM679 350H680V362H679zM680 349H681V363H680zM681 350H682V364H681zM682 349H683V363H682zM683 351H684V363H683zM684 352H685V362H684zM685 352H687V360H685zM687 353H688V359H687zM688 353H689V358H688zM689 354H692V358H689zM692 353H693V358H692zM693 354H694V358H693zM694 354H696V357H694zM696 353H698V358H696zM698 321H699V377H698zM699 351H700V358H699zM700 351H701V359H700zM701 351H702V360H701zM702 351H703V359H702zM703 351H704V360H703zM704 352H705V360H704zM705 351H706V359H705zM706 341H707V368H706zM707 352H708V359H707zM708 353H709V358H708zM709 353H710V359H709zM710 353H711V358H710zM711 353H712V359H711zM712 352H714V359H712zM714 352H716V360H714zM716 351H717V361H716zM717 350H718V360H717zM718 351H719V361H718zM719 351H720V360H719zM720 351H721V361H720zM721 350H723V361H721zM723 351H725V361H723zM725 351H727V360H725zM727 350H729V361H727zM729 351H730V360H729zM730 352H731V359H730zM731 352H732V358H731zM732 352H733V359H732zM733 353H736V358H733zM736 354H741V357H736zM741 355H749V356H741zM754 355H764V356H754z" fill="#7585e0"/>
<path d="M276 210H277V256H276zM277 210H278V246H277zM278 210H279V237H278zM279 210H280V233H279zM280 210H281V237H280zM281 210H282V231H281zM282 210H283V224H282zM283 210H284V221H283zM284 210H285V219H284zM285 210H286V213H285zM286 210H287V259H286zM287 210H288V269H287zM288 210H289V257H288zM289 210H290V251H289zM290 210H291V230H290zM291 210H292V235H291zM292 210H293V228H292zM293 210H294V219H293zM294 210H295V231H294zM295 210H296V245H295zM296 210H297V239H296zM297 210H298V237H297zM298 210H299V232H298zM299 210H300V228H299zM300 210H301V227H300zM301 210H302V224H301zM302 210H303V226H302zM303 210H304V233H303zM304 210H305V224H304zM305 210H306V218H305zM306 210H308V214H306zM308 210H310V216H308zM310 210H311V213H310zM311 210H313V212H311zM313 210H315V211H313zM454 210H455V213H454zM493 210H494V211H493zM503 210H507V211H503zM507 210H508V213H507zM508 210H511V212H508zM511 210H513V213H511zM513 210H514V215H513zM514 210H515V213H514zM515 210H516V214H515zM516 210H517V215H516zM517 210H519V214H517zM519 210H521V215H519zM521 210H523V216H521zM523 210H525V214H523zM525 210H526V212H525zM526 210H527V211H526zM527 210H528V212H527zM528 210H530V211H528zM537 210H538V211H537zM539 210H542V211H539zM542 210H543V213H542zM543 210H545V214H543zM545 210H547V217H545zM547 210H548V219H547zM548 210H550V221H548zM550 210H551V220H550zM551 210H552V225H551zM552 210H553V226H552zM553 210H554V222H553zM554 210H555V221H554zM555 210H556V225H555zM556 210H557V222H556zM557 210H558V218H557zM558 210H560V213H558zM560 210H561V215H560zM561 210H562V216H561zM562 210H563V213H562zM563 210H566V212H563zM566 210H567V211H566zM593 210H594V211H593zM594 210H595V212H594zM595 210H596V211H595zM596 210H597V212H596zM597 210H598V213H597zM598 210H599V212H598zM599 210H600V216H599zM600 210H601V217H600zM601 210H603V216H601zM603 210H604V219H603zM604 210H605V220H604zM605 210H606V219H605zM606 210H607V217H606zM607 210H609V216H607zM609 210H610V213H609zM610 210H611V212H610zM611 210H612V213H611zM612 210H614V212H612zM614 210H616V211H614zM616 210H618V212H616zM618 210H620V211H618zM620 210H621V212H620zM621 210H622V211H621zM622 210H623V212H622zM623 210H624V211H623zM624 210H625V212H624zM625 210H626V211H625zM626 210H627V213H626zM627 210H628V214H627zM628 210H630V217H628zM630 210H632V218H630zM632 210H633V220H632zM633 210H634V221H633zM634 210H635V218H634zM635 210H636V219H635zM636 210H637V221H636zM637 210H638V218H637zM638 210H639V221H638zM639 210H642V216H639zM642 210H643V215H642zM643 210H645V212H643zM645 210H648V211H645zM655 210H656V211H655zM658 210H659V212H658zM662 210H663V211H662zM664 210H666V211H664zM667 210H669V211H667zM670 210H671V211H670zM671 210H673V213H671zM673 210H675V215H673zM675 210H676V218H675zM676 210H677V220H676zM677 210H678V219H677zM678 210H679V220H678zM679 210H680V218H679zM680 210H681V220H680zM681 210H682V217H681zM682 210H683V218H682zM683 210H684V219H683zM684 210H685V217H684zM685 210H687V214H685zM687 210H691V212H687zM691 210H693V211H691zM696 210H698V211H696zM698 210H699V242H698zM699 210H700V213H699zM700 210H701V212H700zM701 210H702V213H701zM702 210H703V212H702zM703 210H705V213H703zM705 210H706V212H705zM706 210H707V227H706zM707 210H711V212H707zM711 210H712V213H711zM712 210H713V212H712zM713 210H716V213H713zM716 210H720V214H716zM720 210H721V215H720zM721 210H722V216H721zM722 210H723V215H722zM723 210H724V216H723zM724 210H725V214H724zM725 210H726V216H725zM726 210H727V215H726zM727 210H728V217H727zM728 210H729V215H728zM729 210H731V214H729zM731 210H732V212H731zM732 210H733V211H732zM733 210H734V212H733zM734 210H736V211H734z" fill="#3a4ccb"/><path d="M276 210H277V223H276zM277 210H278V222H277zM278 210H279V220H278zM279 210H280V218H279zM280 210H281V217H280zM281 210H282V216H281zM282 210H283V215H282zM283 210H284V214H283zM284 210H285V213H284zM285 210H286V212H285zM286 210H287V220H286zM287 210H288V227H287zM288 210H289V228H288zM289 210H290V226H289zM290 210H291V222H290zM291 210H292V220H291zM292 210H293V218H292zM293 210H294V216H293zM294 210H295V215H294zM295 210H296V220H295zM296 210H297V221H296zM297 210H298V220H297zM298 210H299V219H298zM299 210H300V218H299zM300 210H301V217H300zM301 210H302V216H301zM302 210H303V215H302zM303 210H304V214H303zM304 210H305V213H304zM305 210H306V212H305zM306 210H308V211H306zM519 210H520V211H519zM521 210H523V211H521zM545 210H547V212H545zM547 210H548V213H547zM548 210H551V214H548zM551 210H553V217H551zM553 210H555V215H553zM555 210H556V217H555zM556 210H557V215H556zM557 210H558V212H557zM560 210H562V211H560zM599 210H600V211H599zM600 210H601V212H600zM601 210H603V211H601zM603 210H604V213H603zM604 210H605V214H604zM605 210H606V213H605zM606 210H607V212H606zM607 210H609V211H607zM628 210H630V212H628zM630 210H631V213H630zM631 210H632V212H631zM632 210H634V214H632zM634 210H635V212H634zM635 210H636V213H635zM636 210H637V214H636zM637 210H638V213H637zM638 210H639V214H638zM639 210H642V211H639zM675 210H676V213H675zM676 210H677V214H676zM677 210H679V213H677zM679 210H680V212H679zM680 210H681V214H680zM681 210H682V212H681zM682 210H684V213H682zM684 210H685V212H684zM698 210H699V227H698zM706 210H707V218H706zM721 210H722V211H721zM723 210H724V211H723zM725 210H726V211H725zM727 210H728V212H727z" fill="#7585e0"/>
<rect x="812" y="209" width="1" height="68" fill="#d40000"/>
<rect x="812" y="285" width="1" height="142" fill="#d40000"/>
<rect x="56" y="207" width="815" height="1" fill="#8c8c8c"/>
<rect x="56" y="208" width="815" height="1" fill="#555555"/>
<rect x="56" y="209" width="815" height="1" fill="#393939"/>
<rect x="860" y="273" width="8" height="178" rx="4" fill="#c2c2c2" shape-rendering="auto"/>
<rect x="56" y="454" width="815" height="16" fill="#ececec"/>
<rect x="192" y="455" width="663" height="15" fill="#f9f9f9"/>
<rect x="855" y="454" width="16" height="16" fill="#f2f2f2"/>
<rect x="475" y="459" width="322" height="8" rx="4" fill="#c2c2c2" shape-rendering="auto"/>
<rect x="56" y="470" width="815" height="1" fill="#cdcdcd"/>
<rect x="60" y="476" width="4" height="1" fill="#c2c2c2"/>
<rect x="60" y="477" width="4" height="1" fill="#fbfbfb"/>
<rect x="60" y="480" width="4" height="1" fill="#c2c2c2"/>
<rect x="60" y="481" width="4" height="1" fill="#fbfbfb"/>
<rect x="60" y="484" width="4" height="1" fill="#c2c2c2"/>
<rect x="60" y="485" width="4" height="1" fill="#fbfbfb"/>
<rect x="60" y="488" width="4" height="1" fill="#c2c2c2"/>
<rect x="60" y="489" width="4" height="1" fill="#fbfbfb"/>
<rect x="60" y="492" width="4" height="1" fill="#c2c2c2"/>
<rect x="60" y="493" width="4" height="1" fill="#fbfbfb"/>
<rect x="60" y="496" width="4" height="1" fill="#c2c2c2"/>
<rect x="60" y="497" width="4" height="1" fill="#fbfbfb"/>
<rect x="60" y="500" width="4" height="1" fill="#c2c2c2"/>
<rect x="60" y="501" width="4" height="1" fill="#fbfbfb"/>
<rect x="60" y="504" width="4" height="1" fill="#c2c2c2"/>
<rect x="60" y="505" width="4" height="1" fill="#fbfbfb"/>
<rect x="60" y="508" width="4" height="1" fill="#c2c2c2"/>
<rect x="60" y="509" width="4" height="1" fill="#fbfbfb"/>
<rect x="60" y="512" width="4" height="1" fill="#c2c2c2"/>
<rect x="60" y="513" width="4" height="1" fill="#fbfbfb"/>
<rect x="60" y="516" width="4" height="1" fill="#c2c2c2"/>
<rect x="60" y="517" width="4" height="1" fill="#fbfbfb"/>
<rect x="60" y="520" width="4" height="1" fill="#c2c2c2"/>
<rect x="60" y="521" width="4" height="1" fill="#fbfbfb"/>
<text x="73.6" y="490.1" font-size="11" fill="#111" textLength="118.6" lengthAdjust="spacingAndGlyphs" shape-rendering="auto">Projectfrequentie (Hz):</text>
<text x="206.4" y="489.8" font-size="11" fill="#111" textLength="39.3" lengthAdjust="spacingAndGlyphs" shape-rendering="auto">Vangen</text>
<text x="309" y="489.8" font-size="11" fill="#111" textLength="65" lengthAdjust="spacingAndGlyphs" shape-rendering="auto">Audiopositie</text>
<rect x="199" y="488" width="1" height="2" fill="#c2c2c2"/>
<rect x="199" y="491" width="1" height="2" fill="#c2c2c2"/>
<rect x="199" y="512" width="1" height="2" fill="#c2c2c2"/>
<rect x="199" y="515" width="1" height="2" fill="#c2c2c2"/>
<rect x="302" y="488" width="1" height="2" fill="#c2c2c2"/>
<rect x="302" y="491" width="1" height="2" fill="#c2c2c2"/>
<rect x="302" y="512" width="1" height="2" fill="#c2c2c2"/>
<rect x="302" y="515" width="1" height="2" fill="#c2c2c2"/>
<rect x="471" y="488" width="1" height="2" fill="#c2c2c2"/>
<rect x="471" y="491" width="1" height="2" fill="#c2c2c2"/>
<rect x="471" y="512" width="1" height="2" fill="#c2c2c2"/>
<rect x="471" y="515" width="1" height="2" fill="#c2c2c2"/>
<g shape-rendering="auto">
<rect x="73.5" y="498.5" width="76" height="20" rx="2" fill="#fff" stroke="#a9a9a9"/>
<path d="M132 498 h14.5 q4 0 4 4 v13 q0 4 -4 4 h-14.5z" fill="url(#gBlue)"/>
<path d="M138.5 507l3 3l3-3" stroke="#fff" stroke-width="1.5" fill="none"/>
<text x="77" y="513.5" font-size="12" fill="#111" textLength="34.4" lengthAdjust="spacingAndGlyphs">44100</text>
<rect x="205.5" y="497.5" width="90" height="20" rx="4" fill="#fff" stroke="#c5c5c5"/>
<path d="M279 497 h12.5 q4.5 0 4.5 4.5 v11.5 q0 4.5 -4.5 4.5 h-12.5z" fill="url(#gBlue)"/>
<path d="M284.5 505l3-3l3 3 M284.5 509.5l3 3l3-3" stroke="#fff" stroke-width="1.3" fill="none"/>
<text x="214.4" y="510.8" font-size="12.5" fill="#111">Uit</text>
<rect x="477.5" y="476.5" width="316" height="20" rx="4" fill="#fff" stroke="#c5c5c5"/>
<path d="M777 476 h12.5 q4.5 0 4.5 4.5 v11.5 q0 4.5 -4.5 4.5 h-12.5z" fill="url(#gBlue)"/>
<path d="M782.5 484l3-3l3 3 M782.5 488.5l3 3l3-3" stroke="#fff" stroke-width="1.3" fill="none"/>
<text x="486.2" y="489.7" font-size="12" fill="#111" textLength="150" lengthAdjust="spacingAndGlyphs">Begin en einde van selectie</text>
</g>
<rect x="309.3" y="497" width="155.5" height="22" fill="#a8a8a8"/>
<rect x="310.3" y="498" width="153.5" height="20" fill="#ffffff"/>
<rect x="311.3" y="499" width="151.5" height="18" fill="#c5c8d0"/>
<rect x="311.3" y="499" width="20.7" height="18" fill="#d6d6d6"/>
<rect x="347.8" y="499" width="20.5" height="18" fill="#d6d6d6"/>
<rect x="388.3" y="499" width="20" height="18" fill="#d6d6d6"/>
<rect x="412.3" y="499" width="30" height="18" fill="#d6d6d6"/>
<rect x="453.3" y="499" width="2" height="18" fill="#dcdcdc"/>
<path d="M454.8 506h7l-3.5 3z" fill="#000" shape-rendering="auto"/>
<g shape-rendering="auto" fill="#1f22cc" font-size="16" text-anchor="middle">
<text x="316.5" y="514.2">0</text>
<text x="326.9" y="514.2">0</text>
<text x="353.0" y="514.2">0</text>
<text x="363.2" y="514.2">0</text>
<text x="393.5" y="514.2">1</text>
<text x="403.5" y="514.2">3</text>
<text x="417.5" y="514.2">7</text>
<text x="427.5" y="514.2">4</text>
<text x="437.5" y="514.2">6</text>
<text x="410.3" y="514.2">.</text>
</g>
<g shape-rendering="auto" fill="#2a2ab8" font-size="13.5" text-anchor="middle">
<text x="339.9" y="514.2">u</text><text x="378.2" y="514.2">m</text><text x="449.0" y="514.2">s</text>
</g>
<rect x="478.4" y="497" width="155.5" height="22" fill="#a8a8a8"/>
<rect x="479.4" y="498" width="153.5" height="20" fill="#ffffff"/>
<rect x="480.4" y="499" width="151.5" height="18" fill="#c5c8d0"/>
<rect x="480.4" y="499" width="20.7" height="18" fill="#d6d6d6"/>
<rect x="516.9" y="499" width="20.5" height="18" fill="#d6d6d6"/>
<rect x="557.4" y="499" width="20" height="18" fill="#d6d6d6"/>
<rect x="581.4" y="499" width="30" height="18" fill="#d6d6d6"/>
<rect x="622.4" y="499" width="2" height="18" fill="#dcdcdc"/>
<path d="M623.9 506h7l-3.5 3z" fill="#000" shape-rendering="auto"/>
<g shape-rendering="auto" fill="#1f22cc" font-size="16" text-anchor="middle">
<text x="485.6" y="514.2">0</text>
<text x="495.9" y="514.2">0</text>
<text x="522.1" y="514.2">0</text>
<text x="532.4" y="514.2">0</text>
<text x="562.6" y="514.2">0</text>
<text x="572.6" y="514.2">0</text>
<text x="586.6" y="514.2">0</text>
<text x="596.6" y="514.2">0</text>
<text x="606.6" y="514.2">0</text>
<text x="579.4" y="514.2">.</text>
</g>
<g shape-rendering="auto" fill="#2a2ab8" font-size="13.5" text-anchor="middle">
<text x="509.0" y="514.2">u</text><text x="547.3" y="514.2">m</text><text x="618.1" y="514.2">s</text>
</g>
<rect x="638.6" y="497" width="155.5" height="22" fill="#a8a8a8"/>
<rect x="639.6" y="498" width="153.5" height="20" fill="#ffffff"/>
<rect x="640.6" y="499" width="151.5" height="18" fill="#c5c8d0"/>
<rect x="640.6" y="499" width="20.7" height="18" fill="#d6d6d6"/>
<rect x="677.1" y="499" width="20.5" height="18" fill="#d6d6d6"/>
<rect x="717.6" y="499" width="20" height="18" fill="#d6d6d6"/>
<rect x="741.6" y="499" width="30" height="18" fill="#d6d6d6"/>
<rect x="782.6" y="499" width="2" height="18" fill="#dcdcdc"/>
<path d="M784.1 506h7l-3.5 3z" fill="#000" shape-rendering="auto"/>
<g shape-rendering="auto" fill="#1f22cc" font-size="16" text-anchor="middle">
<text x="645.8" y="514.2">0</text>
<text x="656.2" y="514.2">0</text>
<text x="682.3" y="514.2">0</text>
<text x="692.6" y="514.2">0</text>
<text x="722.8" y="514.2">0</text>
<text x="732.8" y="514.2">0</text>
<text x="746.8" y="514.2">0</text>
<text x="756.8" y="514.2">0</text>
<text x="766.8" y="514.2">0</text>
<text x="739.6" y="514.2">.</text>
</g>
<g shape-rendering="auto" fill="#2a2ab8" font-size="13.5" text-anchor="middle">
<text x="669.2" y="514.2">u</text><text x="707.5" y="514.2">m</text><text x="778.3" y="514.2">s</text>
</g>
<rect x="56" y="527" width="815" height="18" fill="#ececec"/>
<rect x="56" y="526" width="815" height="1" fill="#d2d2d2"/>
<rect x="56" y="527" width="815" height="1" fill="#c4c4c4"/>
<rect x="56" y="528" width="815" height="1" fill="#f8f8f8"/>
<text x="61.6" y="539" font-size="11" fill="#111" textLength="53" lengthAdjust="spacingAndGlyphs" shape-rendering="auto">Opnemen.</text>
<text x="212.8" y="539" font-size="11" fill="#111" textLength="343" lengthAdjust="spacingAndGlyphs" shape-rendering="auto">Resterende vrije schijfruimte voor opname: 92 uur en 55 minuten.</text>
<text x="706.5" y="539" font-size="11" fill="#111" textLength="118.3" lengthAdjust="spacingAndGlyphs" shape-rendering="auto">Werkelijke rate: 44100</text>
</g>
</svg></body></html>
